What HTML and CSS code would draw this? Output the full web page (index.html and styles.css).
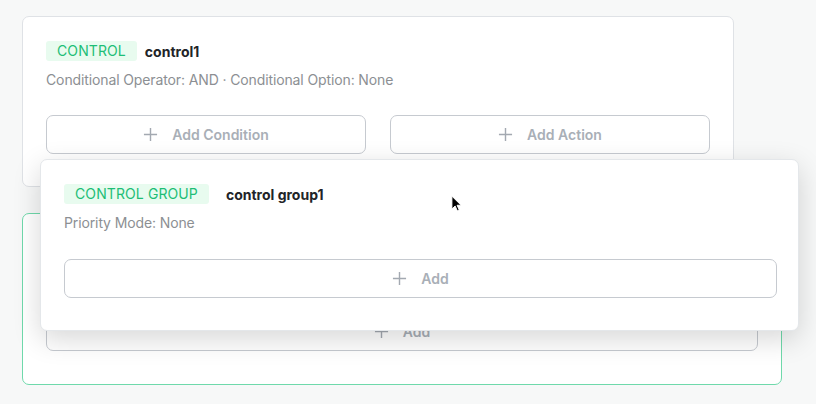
FILE: index.html
```html
<!DOCTYPE html>
<html lang="en">
<head>
    <meta charset="UTF-8">
    <title>Control Builder</title>
    <link rel="stylesheet" href="styles.css">
</head>
<body>
    <div class="board">
        <div class="card card-control">
            <div class="card-head">
                <span class="tag">CONTROL</span>
                <span class="card-name">control1</span>
            </div>
            <div class="card-meta">Conditional Operator: AND · Conditional Option: None</div>
            <div class="card-actions">
                <button class="add-btn"><svg class="plus" viewBox="0 0 16 16"><path d="M8 1v14M1 8h14"/></svg>Add Condition</button>
                <button class="add-btn"><svg class="plus" viewBox="0 0 16 16"><path d="M8 1v14M1 8h14"/></svg>Add Action</button>
            </div>
        </div>

        <div class="card card-drop">
            <div class="card-head ghost">
                <span class="tag">CONTROL GROUP</span>
                <span class="card-name">control group1</span>
            </div>
            <div class="card-meta ghost">Priority Mode: None</div>
            <div class="card-actions">
                <button class="add-btn"><svg class="plus" viewBox="0 0 16 16"><path d="M8 1v14M1 8h14"/></svg>Add</button>
            </div>
        </div>

        <div class="card card-drag">
            <div class="card-head">
                <span class="tag">CONTROL GROUP</span>
                <span class="card-name wide">control group1</span>
            </div>
            <div class="card-meta">Priority Mode: None</div>
            <div class="card-actions">
                <button class="add-btn"><svg class="plus" viewBox="0 0 16 16"><path d="M8 1v14M1 8h14"/></svg>Add</button>
            </div>
        </div>

        <svg class="cursor" viewBox="0 0 12 18"><path d="M1 1v14l3.5-3.3 2.4 5.3 2.1-0.9-2.4-5.2H11z" fill="#000" stroke="#fff" stroke-width="1"/></svg>
    </div>
</body>
</html>
```

FILE: styles.css
```css
html, body { margin: 0; background: #f7f8f8; }
body { font-family: Inter, "Noto Sans", sans-serif; font-size: 14px; color: #1f2328; }

.board { position: relative; padding: 16px 0 0 22px; display: flex; flex-direction: column; gap: 26px; }

.card { background: #fff; border: 1px solid #dfe2e6; border-radius: 7px; padding: 24px 23px 32px 23px; box-sizing: border-box; }
.card-control { width: 712px; }
.card-drop { width: 760px; border-color: #6fd9ab; padding-bottom: 33px; }
.card-drag { position: absolute; left: 40px; top: 159px; width: 759px; padding-right: 21px; border-color: #e4e7ea; box-shadow: 0 8px 28px rgba(0, 0, 0, 0.16); }
.card-drag .card-actions { margin-top: 26px; }

.card-head { display: flex; align-items: center; gap: 8px; height: 20px; }
.tag { display: inline-block; height: 20px; line-height: 20px; padding: 0 11px 0 11px; background: #e8fbef; color: #1dbe76; border-radius: 3px; letter-spacing: 0.1px; font-size: 14px; }
.card-name { font-weight: 700; color: #222428; }
.card-name.wide { margin-left: 9px; }
.card-meta { color: #8c8f93; margin-top: 9px; line-height: 20px; letter-spacing: -0.12px; }
.ghost { visibility: hidden; }

.card-actions { display: flex; gap: 24px; margin-top: 25px; }
.add-btn { flex: 1; height: 39px; display: flex; align-items: center; justify-content: center; gap: 14px; background: #fff; border: 1px solid #c6cad0; border-radius: 7px; font-family: inherit; font-size: 14px; font-weight: 600; color: #a9afb7; padding: 0; }
.plus { width: 15px; height: 15px; fill: none; stroke: #a3a9b1; stroke-width: 1.5; }

.cursor { position: absolute; left: 451px; top: 195px; width: 11px; height: 17px; }
```
